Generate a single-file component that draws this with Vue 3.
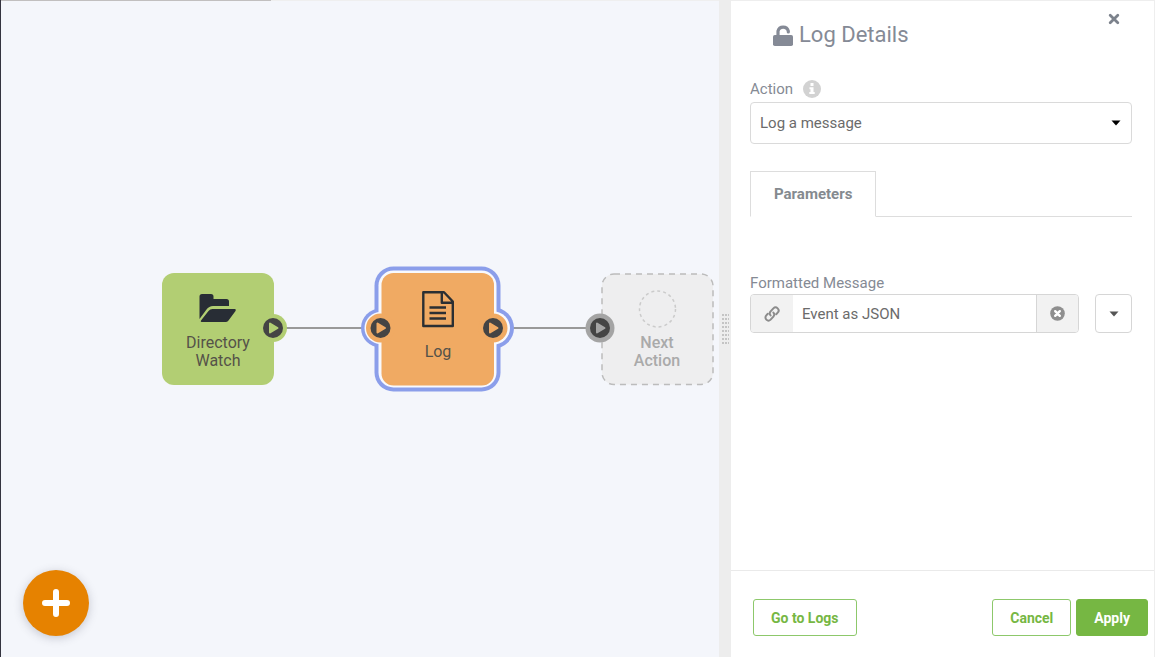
<script setup>
import { ref } from 'vue'

const action = ref('log')
const message = ref('Event as JSON')
</script>

<template>
  <div class="app">
    <main class="canvas">
      <svg class="flow" role="img" aria-label="Workflow">
        <g class="link">
          <path d="M286 328H366M508 328H590" />
        </g>

        <g class="green">
          <rect x="162" y="273" width="112" height="112" rx="12" />
          <circle cx="273" cy="328" r="14" />
        </g>
        <g class="folder">
          <path d="M199.500 296.500Q199.500 294 202 294H211Q213.500 294 213.500 296.500V299H226.500Q229 299 229 301.500V306H213Q209 306 206.500 309.500L199.500 319Z" />
          <path d="M212.500 309H235Q236.500 309.500 235.500 311L228.500 320.500Q227.300 322 225.500 322H201.500Q200.200 321.700 201 320.400L208.500 311Q210 309 212.500 309Z" />
        </g>
        <text class="label" x="218" y="348">Directory</text>
        <text class="label" x="218" y="366">Watch</text>

        <g class="halo">
          <rect x="374.500" y="266.500" width="126" height="125" rx="19" />
          <circle cx="380.500" cy="328" r="19.500" />
          <circle cx="493.500" cy="328" r="20.500" />
        </g>
        <g class="rim">
          <rect x="378.500" y="270.500" width="118" height="117" rx="15" />
          <circle cx="380.500" cy="328" r="16" />
          <circle cx="493.500" cy="328" r="16.500" />
        </g>
        <g class="orange">
          <rect x="381.500" y="273" width="112.500" height="112.500" rx="12" />
          <circle cx="380.500" cy="328" r="14.500" />
          <circle cx="493" cy="328" r="14.500" />
        </g>
        <g class="doc">
          <path d="M423.300 292.200H444L452.800 301.500V326H423.300ZM441.800 292.200V302.700H452.800" />
          <path d="M429.500 307.500H446M429.500 313H446M429.500 318.500H446" />
        </g>
        <text class="label" x="438" y="357">Log</text>

        <rect class="ghost" x="602" y="274" width="111" height="110.500" rx="12" />
        <circle class="ghost-icon" cx="657.500" cy="309" r="18" />
        <circle class="gray" cx="600" cy="328" r="14.500" />
        <text class="label faint" x="657" y="348">Next</text>
        <text class="label faint" x="657" y="366">Action</text>

        <g class="dot">
          <circle cx="273" cy="328" r="10" />
          <circle cx="380.500" cy="328" r="10" />
          <circle cx="493" cy="328" r="10" />
          <circle cx="600" cy="328" r="10" />
        </g>
        <path class="green play" d="M270 323.500V332.500L277.500 328Z" />
        <path class="orange play" d="M377.500 323.500V332.500L385 328Z" />
        <path class="orange play" d="M490 323.500V332.500L497.500 328Z" />
        <path class="gray play" d="M597 323.500V332.500L604.500 328Z" />
      </svg>
      <button class="add" type="button" aria-label="Add step">
        <svg width="28" height="28" viewBox="0 0 28 28"><path d="M14 3V25M3 14H25" stroke="#fff" stroke-width="6" stroke-linecap="round" /></svg>
      </button>
    </main>

    <div class="splitter"><span class="grip"></span></div>

    <aside class="panel">
      <button class="close" type="button" aria-label="Close">
        <svg width="12" height="12" viewBox="0 0 12 12"><path d="M2.200 2.200L9.800 9.800M9.800 2.200L2.200 9.800" stroke="#7c828c" stroke-width="2.800" stroke-linecap="round" /></svg>
      </button>
      <h1 class="title">
        <svg width="20" height="22" viewBox="0 0 20 22">
          <rect x="0" y="11" width="20" height="11" rx="1.800" fill="#858a96" />
          <path d="M5 12V7.200A5.300 5.300 0 0 1 15.300 7.200V8" fill="none" stroke="#858a96" stroke-width="3.200" stroke-linecap="round" />
        </svg>
        Log Details
      </h1>

      <div class="body">
        <div class="label-row">
          <label for="action">Action</label>
          <svg width="18" height="18" viewBox="0 0 18 18">
            <circle cx="9" cy="9" r="9" fill="#d2d2d2" />
            <path d="M7.500 3H10.500V6H7.500ZM6.500 7.200H10.500V12H11.700V14H6.300V12H7.500V9.200H6.500Z" fill="#fff" />
          </svg>
        </div>
        <div class="select-box">
          <select id="action" v-model="action">
            <option value="log">Log a message</option>
          </select>
          <svg class="caret" width="10" height="6" viewBox="0 0 10 6"><path d="M.5.500H9.500L5 5.500Z" fill="#000" /></svg>
        </div>

        <div class="tabs" role="tablist">
          <button class="tab" type="button" role="tab" aria-selected="true">Parameters</button>
        </div>

        <div class="label-row"><label for="message">Formatted Message</label></div>
        <div class="field">
          <div class="group">
            <span class="addon">
              <svg width="16" height="16" viewBox="0 0 16 16" fill="none" stroke="#8c8c8c" stroke-width="2" stroke-linecap="round">
                <path d="M6.600 9.400A3 3 0 0 1 6.600 5.400L9.400 2.400A3 3 0 0 1 13.700 6.600L12.200 8.200" />
                <path d="M9.400 6.600A3 3 0 0 1 9.400 10.600L6.600 13.600A3 3 0 0 1 2.300 9.400L3.800 7.800" />
              </svg>
            </span>
            <input id="message" v-model="message" type="text" />
            <button class="addon clear" type="button" aria-label="Clear" @click="message = ''">
              <svg width="15" height="15" viewBox="0 0 15 15">
                <circle cx="7.500" cy="7.500" r="7.300" fill="#8f8f8f" />
                <path d="M5.200 5.200L9.800 9.800M9.800 5.200L5.200 9.800" stroke="#fff" stroke-width="2.400" stroke-linecap="round" />
              </svg>
            </button>
          </div>
          <button class="more" type="button" aria-label="More options">
            <svg width="10" height="6" viewBox="0 0 10 6"><path d="M.5.500H9.500L5 5.500Z" fill="#555" /></svg>
          </button>
        </div>
      </div>

      <footer class="footer">
        <button class="btn" type="button">Go to Logs</button>
        <span class="actions">
          <button class="btn" type="button">Cancel</button>
          <button class="btn primary" type="button">Apply</button>
        </span>
      </footer>
    </aside>
  </div>
</template>

<style>
body {
  margin: 0;
}
</style>

<style scoped>
.app {
  display: grid;
  grid-template-columns: minmax(0, 1fr) 12px 424px;
  min-height: 100vh;
  font-family: Roboto, "Liberation Sans", sans-serif;
  font-size: 15px;
  color: #858a94;
}
.app * {
  box-sizing: border-box;
}
button,
input,
select {
  font: inherit;
  margin: 0;
}
button {
  cursor: pointer;
}
svg {
  display: block;
  flex: none;
}

.canvas {
  position: relative;
  display: flex;
  background: linear-gradient(90deg, #c1bfbf 270px, #efefef 270px) top / 100% 1px no-repeat, #f4f6fb;
  border-left: 1px solid #34343f;
}
.flow {
  width: calc(100% + 1px);
  margin-left: -1px;
  flex: none;
}
.link {
  stroke: #999;
  stroke-width: 2;
}
.green {
  fill: #b2ce73;
}
.orange {
  fill: #f0aa63;
}
.gray {
  fill: #a4a4a4;
}
.halo {
  fill: #8b9eea;
}
.rim {
  fill: #f8f9fd;
}
.folder {
  fill: #282d35;
}
.doc {
  fill: none;
  stroke: #2b2f33;
  stroke-width: 2.4;
  stroke-linejoin: round;
}
.dot {
  fill: #444;
}
.play {
  stroke-width: 2;
  stroke-linejoin: round;
}
.play.green {
  stroke: #b2ce73;
}
.play.orange {
  stroke: #f0aa63;
}
.play.gray {
  stroke: #a4a4a4;
}
.ghost {
  fill: #eeeeef;
  stroke: #bcbcbc;
  stroke-width: 1.5;
  stroke-dasharray: 6 5;
}
.ghost-icon {
  fill: none;
  stroke: #cbcbcb;
  stroke-width: 1.5;
  stroke-dasharray: 3 3;
}
.label {
  font-size: 16px;
  fill: #555249;
  text-anchor: middle;
}
.label.faint {
  fill: #aaa;
  font-weight: 500;
}
.add {
  position: absolute;
  left: 22px;
  bottom: 21px;
  width: 66px;
  height: 66px;
  display: grid;
  place-items: center;
  padding: 0;
  border: 0;
  border-radius: 50%;
  background: #e68200;
  box-shadow: 0 2px 10px rgba(60, 60, 80, 0.25);
}

.splitter {
  display: grid;
  place-items: center;
  background: #ededed;
}
.grip {
  width: 8px;
  height: 34px;
  background: repeating-linear-gradient(#ededed 0 2px, transparent 2px 4px), repeating-linear-gradient(90deg, #ededed 0 1px, #c4c4c4 1px 3px);
}

.panel {
  position: relative;
  display: flex;
  flex-direction: column;
  border-top: 1px solid #eee;
  border-right: 1px solid #eee;
  background: #fff;
}
.close {
  position: absolute;
  top: 12px;
  right: 34px;
  padding: 0;
  border: 0;
  background: none;
}
.title {
  display: flex;
  align-items: center;
  gap: 6px;
  margin: 20px 0 0 42px;
  font-size: 22px;
  line-height: 28px;
  font-weight: 400;
  color: #858a96;
}
.body {
  flex: 1;
  padding: 30px 22px 0 19px;
}
.label-row {
  display: flex;
  align-items: center;
  gap: 10px;
  height: 20px;
}
.select-box {
  display: grid;
  align-items: center;
  margin-top: 3px;
}
.select-box > * {
  grid-area: 1 / 1;
}
.caret {
  justify-self: end;
  margin-right: 11px;
  pointer-events: none;
}
select {
  appearance: none;
  width: 100%;
  height: 42px;
  padding: 0 28px 0 9px;
  border: 1px solid #dadada;
  border-radius: 4px;
  background: #fff;
  color: #6b6b6b;
}
.tabs {
  display: flex;
  margin: 27px 0 56px;
  border-bottom: 1px solid #ddd;
}
.tab {
  height: 46px;
  margin-bottom: -1px;
  padding: 0 23px;
  border: 1px solid #ddd;
  border-bottom-color: #fff;
  background: #fff;
  color: #858a8f;
  font-weight: 700;
}
.field {
  display: flex;
  gap: 16px;
  margin-top: 1px;
  height: 39px;
}
.group {
  display: flex;
  flex: 1;
  min-width: 0;
  border: 1px solid #d6d6d6;
  border-radius: 4px;
  overflow: hidden;
}
.addon {
  display: grid;
  place-items: center;
  width: 42px;
  padding: 0;
  border: 0;
  background: #f2f2f2;
}
.clear {
  border-left: 1px solid #d6d6d6;
}
input {
  flex: 1;
  min-width: 0;
  padding: 0 9px;
  border: 0;
  background: #fff;
  color: #6b6b6b;
}
.more {
  display: grid;
  place-items: center;
  width: 37px;
  padding: 0;
  border: 1px solid #d6d6d6;
  border-radius: 4px;
  background: #fff;
}
.footer {
  display: flex;
  justify-content: space-between;
  padding: 28px 6px 21px 22px;
  border-top: 1px solid #eaeaea;
}
.actions {
  display: flex;
  gap: 5px;
}
.btn {
  height: 37px;
  padding: 0 17px;
  border: 1px solid #8dc86b;
  border-radius: 3px;
  background: #fff;
  color: #76b743;
  font-size: 14px;
  font-weight: 700;
}
.primary {
  border-color: #76b743;
  background: #76b743;
  color: #fff;
}
</style>
